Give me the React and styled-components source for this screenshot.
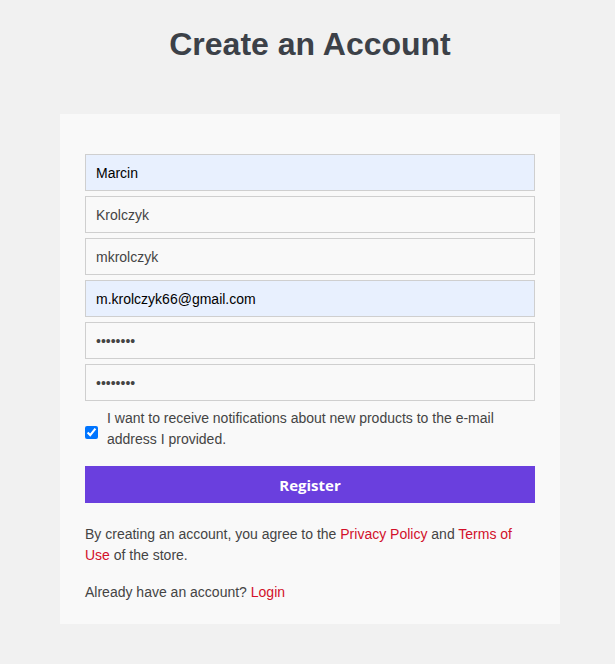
import React from "react";
import styled, { createGlobalStyle } from "styled-components";

const GlobalStyle = createGlobalStyle`
  body {
    margin: 0;
    background: #f1f1f1;
    font-family: "Liberation Sans", Arial, sans-serif;
  }
`;

const Page = styled.div`
  display: flex;
  flex-direction: column;
  align-items: center;
  padding: 26px 0 40px 5px;
`;

const Title = styled.h1`
  margin: 0 0 51px;
  font-size: 32px;
  line-height: 37px;
  font-weight: 700;
  color: #3c4148;
`;

const Card = styled.form`
  width: 500px;
  box-sizing: border-box;
  background: #f9f9f9;
  padding: 40px 25px 21px;
  display: flex;
  flex-direction: column;
`;

const Input = styled.input`
  height: 37px;
  box-sizing: border-box;
  margin-bottom: 5px;
  padding: 0 10px;
  border: 1px solid #cfcfcf;
  border-radius: 0;
  background: ${(p) => (p.$filled ? "#e8f0fe" : "#f9f9f9")};
  color: ${(p) => (p.$filled ? "#000" : "#444")};
  font-family: inherit;
  font-size: 14px;
  outline: none;
`;

const CheckRow = styled.label`
  display: flex;
  align-items: center;
  gap: 9px;
  margin-top: 2px;
  font-size: 14px;
  line-height: 21px;
  color: #444;
`;

const Check = styled.input`
  margin: 6px 0 0;
  width: 13px;
  height: 13px;
  flex: none;
`;

const Button = styled.button`
  margin-top: 16px;
  height: 37px;
  border: none;
  border-radius: 0;
  background: #6a3fde;
  color: #fff;
  font-family: "Open Sans", sans-serif;
  font-weight: 700;
  font-size: 15px;
  cursor: pointer;
`;

const Text = styled.p`
  margin: ${(p) => p.$mt || "0"} 0 0;
  font-size: 14px;
  line-height: 21px;
  color: #444;
`;

const Link = styled.a`
  color: #d2102a;
  text-decoration: none;
`;

export default function App() {
  return (
    <>
      <GlobalStyle />
      <Page>
        <Title>Create an Account</Title>
        <Card onSubmit={(e) => e.preventDefault()}>
          <Input $filled defaultValue="Marcin" />
          <Input defaultValue="Krolczyk" />
          <Input defaultValue="mkrolczyk" />
          <Input $filled defaultValue="m.krolczyk66@gmail.com" />
          <Input type="password" defaultValue="password" />
          <Input type="password" defaultValue="password" />
          <CheckRow>
            <Check type="checkbox" defaultChecked />
            <span>
              I want to receive notifications about new products to the e-mail
              address I provided.
            </span>
          </CheckRow>
          <Button type="submit">Register</Button>
          <Text $mt="21px">
            By creating an account, you agree to the{" "}
            <Link href="#">Privacy Policy</Link> and{" "}
            <Link href="#">Terms of Use</Link> of the store.
          </Text>
          <Text $mt="16px">
            Already have an account? <Link href="#">Login</Link>
          </Text>
        </Card>
      </Page>
    </>
  );
}
